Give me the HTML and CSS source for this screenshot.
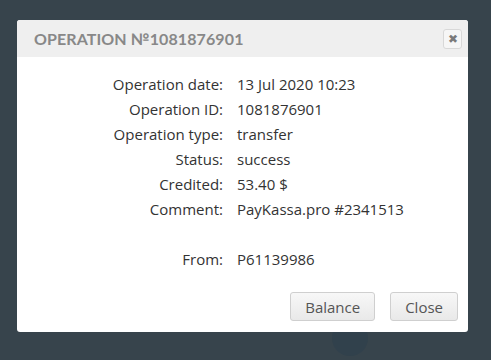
FILE: index.html
```
<!DOCTYPE html>
<html lang="en">

<head>
    <meta charset="UTF-8">
    <meta name="viewport" content="width=device-width, initial-scale=1.0">
    <title>Operation</title>
    <link rel="stylesheet" href="styles.css">
</head>

<body>
    <div class="backdrop">
        <span class="ghost-circle"></span>
    </div>

    <div class="dialog">
        <div class="dialog-header">
            <h2 class="dialog-title">Operation №1081876901</h2>
            <button class="close-x" title="Close">&#10006;</button>
        </div>

        <div class="dialog-body">
            <div class="details">
                <span class="label">Operation date:</span><span class="value">13 Jul 2020 10:23</span>
                <span class="label">Operation ID:</span><span class="value">1081876901</span>
                <span class="label">Operation type:</span><span class="value">transfer</span>
                <span class="label">Status:</span><span class="value">success</span>
                <span class="label">Credited:</span><span class="value">53.40 $</span>
                <span class="label">Comment:</span><span class="value">PayKassa.pro #2341513</span>
                <span class="label"></span><span class="value"></span>
                <span class="label">From:</span><span class="value">P61139986</span>
            </div>
        </div>

        <div class="dialog-footer">
            <button class="btn">Balance</button>
            <button class="btn">Close</button>
        </div>
    </div>
</body>

</html>
```

FILE: styles.css
```
body {
    margin: 0;
    width: 491px;
    height: 360px;
    overflow: hidden;
    background-color: #37444c;
    font-family: "Open Sans", Arial, sans-serif;
    position: relative;
}

.backdrop {
    position: absolute;
    inset: 0;
}

.ghost-circle {
    position: absolute;
    left: 332px;
    top: 320px;
    width: 36px;
    height: 36px;
    border-radius: 50%;
    background-color: #31414c;
}

.dialog {
    position: relative;
    margin: 20px 0 0 17px;
    width: 451px;
    height: 312px;
    background-color: #fff;
    border-radius: 3px;
    display: flex;
    flex-direction: column;
    overflow: hidden;
}

.dialog-header {
    height: 37px;
    background-color: #efefef;
    display: flex;
    align-items: center;
    justify-content: space-between;
    padding: 0 6px 0 17px;
}

.dialog-title {
    margin: 0;
    font-family: Lato, "Open Sans", sans-serif;
    font-weight: 700;
    font-size: 16px;
    letter-spacing: 0.1px;
    text-transform: uppercase;
    color: #888;
}

.close-x {
    width: 19px;
    height: 20px;
    padding: 0;
    border: 1px solid #d8d8d8;
    border-radius: 3px;
    background-color: #f6f6f6;
    color: #7a7a7a;
    font-size: 12px;
    line-height: 18px;
    cursor: pointer;
}

.dialog-body {
    padding-top: 14px;
}

.details {
    display: grid;
    grid-template-columns: 206px auto;
    column-gap: 14px;
    grid-auto-rows: 25px;
    align-items: center;
    font-size: 15px;
    color: #333;
}

.label {
    text-align: right;
}

.dialog-footer {
    margin-top: auto;
    display: flex;
    justify-content: flex-end;
    gap: 15px;
    padding: 0 10px 11px 0;
}

.btn {
    height: 29px;
    padding: 0 14px;
    font-family: "Open Sans", Arial, sans-serif;
    font-size: 15px;
    color: #555;
    background: linear-gradient(#f7f7f7, #e9e9e9);
    border: 1px solid #cfcfcf;
    border-radius: 3px;
    cursor: pointer;
}
```
